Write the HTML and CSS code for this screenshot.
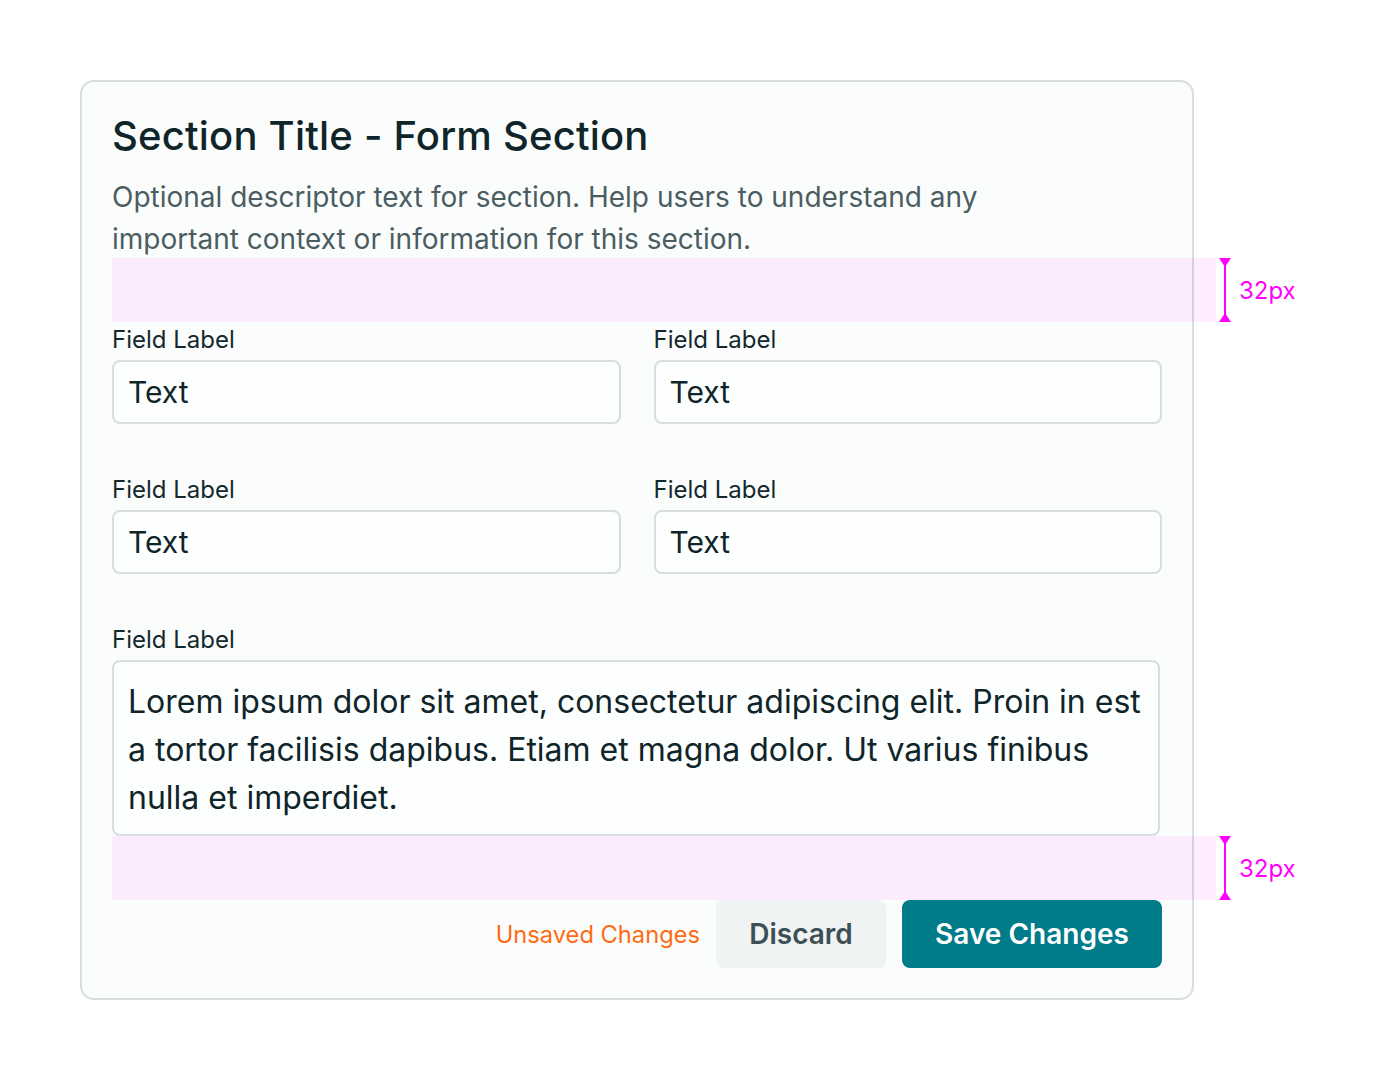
FILE: index.html
```html
<!DOCTYPE html>
<html lang="en">
  <head>
    <meta charset="UTF-8" />
    <meta name="viewport" content="width=device-width, initial-scale=1.0"/>
    <title>Form Section</title>
    <link rel="stylesheet" href="styles.css">
  </head>
  <body>
    <div class="card">
      <h1 class="title">Section Title - Form Section</h1>
      <p class="desc">Optional descriptor text for section. Help users to understand any important context or information for this section.</p>

      <!-- spacing annotation -->
      <div class="spacer">
        <div class="spacer-mark"><span class="arrow"></span><span class="spacer-label">32px</span></div>
      </div>

      <div class="grid">
        <div class="field">
          <label class="label">Field Label</label>
          <div class="input">Text</div>
        </div>
        <div class="field">
          <label class="label">Field Label</label>
          <div class="input">Text</div>
        </div>
        <div class="field">
          <label class="label">Field Label</label>
          <div class="input">Text</div>
        </div>
        <div class="field">
          <label class="label">Field Label</label>
          <div class="input">Text</div>
        </div>
        <div class="field wide">
          <label class="label">Field Label</label>
          <div class="input area">Lorem ipsum dolor sit amet, consectetur adipiscing elit. Proin in est a tortor facilisis dapibus. Etiam et magna dolor. Ut varius finibus nulla et imperdiet.</div>
        </div>
      </div>

      <div class="spacer">
        <div class="spacer-mark"><span class="arrow"></span><span class="spacer-label">32px</span></div>
      </div>

      <div class="actions">
        <span class="unsaved">Unsaved Changes</span>
        <button class="btn btn-secondary">Discard</button>
        <button class="btn btn-primary">Save Changes</button>
      </div>
    </div>
  </body>
</html>
```

FILE: styles.css
```css
body {
  margin: 0;
  padding: 80px;
  background-color: #ffffff;
  font-family: Inter, "Noto Sans", sans-serif;
  color: #0f2529;
}
.card {
  width: 1050px;
  padding: 30px 30px 30px 30px;
  border: 2px solid #d6dee1;
  border-radius: 14px;
  background-color: #fbfdfd;
}
.title {
  margin: 0 0 16px 0;
  font-size: 40px;
  line-height: 48px;
  font-weight: 500;
  letter-spacing: 0.2px;
}
.desc {
  margin: 0 0 -2px 0;
  max-width: 900px;
  font-size: 28px;
  line-height: 42px;
  color: #4b5d61;
}
.spacer {
  position: relative;
  height: 64px;
}
.spacer::before {
  content: "";
  position: absolute;
  left: 0;
  top: 0;
  bottom: 0;
  right: -54px;
  background-color: rgba(255, 0, 255, 0.07);
}
.spacer-mark {
  position: absolute;
  top: 0;
  bottom: 0;
  left: 1112px;
  display: flex;
  align-items: center;
}
.arrow {
  position: relative;
  width: 2px;
  height: 100%;
  background-color: #ff00ff;
}
.arrow::before,
.arrow::after {
  content: "";
  position: absolute;
  left: -5px;
  border-left: 6px solid transparent;
  border-right: 6px solid transparent;
}
.arrow::before {
  top: 0;
  border-top: 9px solid #ff00ff;
}
.arrow::after {
  bottom: 0;
  border-bottom: 9px solid #ff00ff;
}
.spacer-label {
  margin-left: 13px;
  font-size: 24px;
  color: #ff00ff;
}
.grid {
  display: grid;
  grid-template-columns: 1fr 1fr;
  column-gap: 33px;
  row-gap: 48px;
}
.field {
  display: flex;
  flex-direction: column;
  gap: 2px;
}
.field.wide {
  grid-column: 1 / 3;
}
.label {
  font-size: 24px;
  line-height: 36px;
  color: #14292d;
}
.input {
  box-sizing: border-box;
  height: 64px;
  padding: 0 14px;
  display: flex;
  align-items: center;
  border: 2px solid #d6dee1;
  border-radius: 8px;
  background-color: #fdfefe;
  font-size: 30px;
  color: #0f2529;
}
.input.area {
  display: block;
  height: 176px;
  margin-right: 2px;
  padding: 16px 14px;
  font-size: 32px;
  line-height: 48px;
}
.actions {
  display: flex;
  justify-content: flex-end;
  align-items: center;
  gap: 16px;
}
.unsaved {
  margin-right: 0;
  font-size: 23.7px;
  color: #ff6b13;
}
.btn {
  height: 68px;
  border: none;
  border-radius: 8px;
  font-family: Inter, "Noto Sans", sans-serif;
  font-size: 28px;
  font-weight: 600;
  cursor: pointer;
}
.btn-secondary {
  width: 170px;
  background-color: #f0f3f4;
  color: #3d4f53;
}
.btn-primary {
  width: 260px;
  background-color: #007b8a;
  color: #ffffff;
}
```
